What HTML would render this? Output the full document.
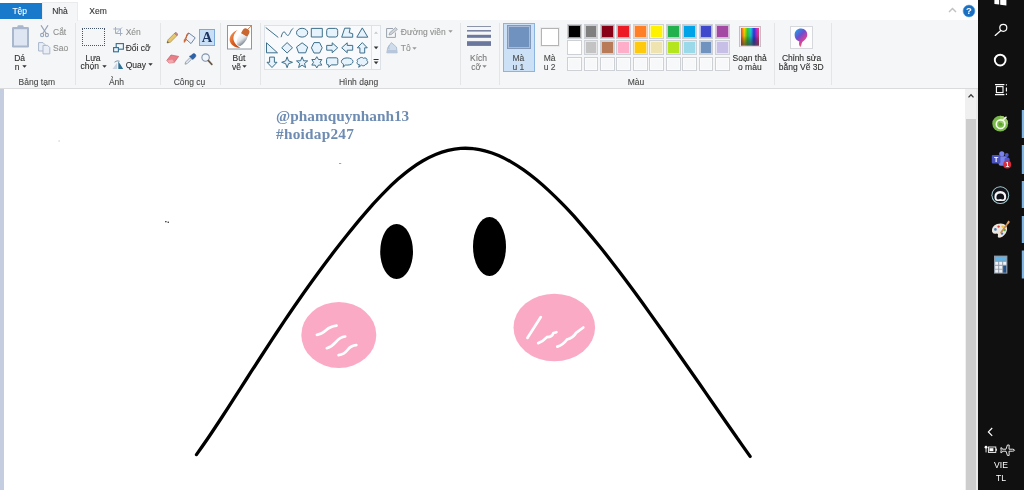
<!DOCTYPE html>
<html><head><meta charset="utf-8">
<style>
*{margin:0;padding:0;box-sizing:border-box}
html,body{width:1024px;height:490px;overflow:hidden;background:#fff;font-family:"Liberation Sans",sans-serif}
#root{position:absolute;left:0;top:0;width:1024px;height:490px;overflow:hidden;background:#fff;will-change:transform}
#soft{position:absolute;left:0;top:0;width:1024px;height:490px;filter:blur(0.35px)}
.abs{position:absolute}
/* tabs */
#tabbar{position:absolute;left:0;top:0;width:978px;height:19.5px;background:#fff}
#tep{position:absolute;left:0;top:2.5px;width:42px;height:16.7px;padding-right:2.5px;background:#1979ca;color:#fff;font-size:8.5px;line-height:17px;text-align:center}
#nha{position:absolute;left:42px;top:2px;width:36px;height:18.5px;background:#f5f6f7;border:1px solid #eaebed;border-bottom:none;color:#333;font-size:8.5px;line-height:17px;text-align:center}
#xem{position:absolute;left:88px;top:3px;width:20px;height:17px;color:#333;font-size:8.5px;line-height:17px;text-align:center}
#ribbon{position:absolute;left:0;top:19.5px;width:978px;height:69.3px;background:#f5f6f7;border-bottom:1px solid #dadbdc}
.t{position:absolute;font-size:8.5px;line-height:10px;color:#2e2e2e;white-space:nowrap;transform:translateX(-50%);text-align:center}
.tl{position:absolute;font-size:8.5px;line-height:10px;color:#2e2e2e;white-space:nowrap}
.t,.tl,#nha,#xem,#tep{-webkit-text-stroke:0.1px currentColor}
.dis{color:#8f8f8f}
.lab{color:#4a4a4a}
.lab2{color:#4a4a4a}
.dis2{color:#777}
.sw{position:absolute;width:14.7px;height:14.7px;border:1px solid #cdd1d6;box-shadow:inset 0 0 0 1px rgba(255,255,255,0.6)}
.sep{position:absolute;top:23px;width:1px;height:62px;background:#e4e5e7}
/* canvas */
#canvas{position:absolute;left:0;top:89px;width:965px;height:401px;background:#fff}
#lstrip{position:absolute;left:0;top:89px;width:3.5px;height:401px;background:#c5cee0}
#scroll{position:absolute;left:965.4px;top:89px;width:12.6px;height:401px;background:#f0f0f0}
#thumb{position:absolute;left:965.6px;top:118.5px;width:10.2px;height:372px;background:#cdcdcd}
#task{position:absolute;left:978px;top:0;width:46px;height:490px;background:#101010}
</style></head><body><div id="root"><div id="soft">
<div id="tabbar"></div>
<div id="ribbon"></div>
<div id="tep">Tệp</div><div id="nha">Nhà</div><div id="xem">Xem</div>
<svg class="abs" style="left:10.8px;top:24px" width="19" height="24" viewBox="0 0 19 24">
<rect x="1" y="3" width="17" height="20.5" rx="1.2" fill="#a9b7cc"/>
<rect x="3" y="5.2" width="13" height="16.3" fill="#dde6f2"/>
<rect x="6.5" y="1.2" width="6" height="3.6" rx="1" fill="#a9b7cc"/>
</svg>
<div class="t " style="left:19.6px;top:52.5px">Dá</div>
<div class="tl " style="left:14.7px;top:62.1px">n</div>
<svg class="abs" style="left:21.5px;top:65px" width="5" height="3" viewBox="0 0 5 3"><path d="M0.3 0.3 H4.7 L2.5 2.8 Z" fill="#333"/></svg>
<svg class="abs" style="left:39.5px;top:25px" width="9" height="12.5" viewBox="0 0 9 12.5">
<g fill="none" stroke="#93a2b9" stroke-width="1.1" stroke-linecap="round"><path d="M1.2 0.6 L6.2 8.5"/><path d="M7.8 0.6 L2.8 8.5"/>
<ellipse cx="2.1" cy="10" rx="1.5" ry="1.8"/><ellipse cx="6.9" cy="10" rx="1.5" ry="1.8"/></g></svg>
<div class="tl dis" style="left:53px;top:26.5px">Cắt</div>
<svg class="abs" style="left:38px;top:42px" width="12.5" height="12.5" viewBox="0 0 12.5 12.5">
<path d="M0.6 0.6 H5 L7 2.6 V9 H0.6 Z" fill="#e9eef6" stroke="#a9b7cc" stroke-width="1"/>
<path d="M5 3.4 H9.6 L11.8 5.6 V11.9 H5 Z" fill="#e9eef6" stroke="#a9b7cc" stroke-width="1"/>
</svg>
<div class="tl dis" style="left:53px;top:43.2px">Sao</div>
<div class="t lab" style="left:36.8px;top:76.8px">Bảng tạm</div>
<div class="sep" style="left:74.5px"></div>
<div class="abs" style="left:82.1px;top:28.2px;width:23px;height:18.3px;border:1px dotted #46566a"></div>
<div class="t " style="left:93px;top:52.5px">Lựa</div>
<div class="tl " style="left:80.6px;top:61.3px">chọn</div>
<svg class="abs" style="left:101.5px;top:64.5px" width="5" height="3" viewBox="0 0 5 3"><path d="M0.3 0.3 H4.7 L2.5 2.8 Z" fill="#333"/></svg>
<svg class="abs" style="left:113px;top:27px" width="10" height="9" viewBox="0 0 10 9">
<g fill="none" stroke="#a3afc2" stroke-width="1"><path d="M2.5 0 V6.5 H9.5"/><path d="M0.3 2 H7.5 V8.8"/><path d="M9 0.5 L3.5 6"/></g></svg>
<div class="tl dis" style="left:125.7px;top:26.5px">Xén</div>
<svg class="abs" style="left:112.8px;top:43px" width="11" height="10" viewBox="0 0 11 10">
<rect x="3.2" y="0.6" width="7.2" height="5.6" fill="#f5f6f7" stroke="#2e6f94" stroke-width="1.1"/>
<rect x="0.6" y="4.6" width="4.8" height="4.2" fill="#eef3f8" stroke="#2e6f94" stroke-width="1.1"/></svg>
<div class="tl " style="left:125.7px;top:43.2px">Đổi cỡ</div>
<svg class="abs" style="left:112.3px;top:59.5px" width="12" height="10" viewBox="0 0 12 10">
<path d="M0.5 9 L5.2 9 L5.2 2.5 Z" fill="#c9d3e0"/>
<path d="M6.3 9 L11.2 9 L6.3 1.2 Z" fill="#2e6f94"/>
<path d="M2.5 2.2 Q5 0 7.6 1.2" fill="none" stroke="#6f8aa5" stroke-width="0.9"/></svg>
<div class="tl " style="left:125.7px;top:59.9px">Quay</div>
<svg class="abs" style="left:148px;top:63.2px" width="5" height="3" viewBox="0 0 5 3"><path d="M0.3 0.3 H4.7 L2.5 2.8 Z" fill="#333"/></svg>
<div class="t lab" style="left:116.5px;top:76.8px">Ảnh</div>
<div class="sep" style="left:160px"></div>
<svg class="abs" style="left:165.5px;top:32px" width="12.5" height="12" viewBox="0 0 12.5 12">
<path d="M1 11 L2 7.8 L8.6 1.2 L11 3.6 L4.4 10.2 Z" fill="#e6c66e" stroke="#a68b45" stroke-width="0.7"/>
<path d="M8.6 1.2 L9.8 0.3 L12 2.4 L11 3.6 Z" fill="#d98a90" stroke="#8a5a5a" stroke-width="0.6"/>
<path d="M1 11 L1.6 9 L3 10.4 Z" fill="#555"/></svg>
<svg class="abs" style="left:183px;top:31.5px" width="13.5" height="12.5" viewBox="0 0 13.5 12.5">
<path d="M5.8 1 L12.2 5.8 L8 11.6 L2.4 6.6 Z" fill="#eef3f9" stroke="#6f86a8" stroke-width="1"/>
<path d="M3 5.6 Q0.6 7.2 1 10.5 Q2.2 9.4 3.4 8.2" fill="#e0703a" stroke="#c05a2a" stroke-width="0.5"/>
<path d="M5.8 1 Q3 2.5 3.2 6.5" fill="none" stroke="#d0602a" stroke-width="1.1"/></svg>
<div class="abs" style="left:198.5px;top:29px;width:16.8px;height:16.8px;background:#c9dff6;border:1px solid #7eaadb"></div>
<div class="abs" style="left:198.5px;top:29.4px;width:16.8px;height:16.8px;line-height:16.8px;text-align:center;font-family:'Liberation Serif',serif;font-weight:bold;font-size:14.5px;color:#1d3560">A</div>
<svg class="abs" style="left:166px;top:53.5px" width="13.5" height="10" viewBox="0 0 13.5 10">
<path d="M0.8 6.4 L5 1 L12.6 2.4 L8.2 8.6 L3 9 Z" fill="#e78088" stroke="#c45a64" stroke-width="0.7"/>
<path d="M0.8 6.4 L3 9 L8.2 8.6 L6.4 5.6 Z" fill="#f1a9ad"/></svg>
<svg class="abs" style="left:184px;top:52.5px" width="12.5" height="12" viewBox="0 0 12.5 12">
<path d="M1 11.2 L1.6 9 L6 4.6 L7.6 6.2 L3.2 10.6 Z" fill="#dfe6ee" stroke="#7a8aa0" stroke-width="0.7"/>
<path d="M5.4 3.2 L8.8 6.6 L10 5.4 L11.6 3.8 Q12.4 2 11 0.9 Q9.6 0.2 8.4 1.2 L6.8 2.8 Z" fill="#2d62a8" stroke="#1f4a88" stroke-width="0.5"/></svg>
<svg class="abs" style="left:201px;top:53px" width="12" height="12.5" viewBox="0 0 12 12.5">
<circle cx="4.6" cy="4.6" r="3.7" fill="#f2f6fb" stroke="#7f92ad" stroke-width="1.1"/>
<path d="M7.4 7.6 L10.8 11.4" stroke="#6a5a4a" stroke-width="1.7" stroke-linecap="round"/></svg>
<div class="t lab" style="left:189.5px;top:76.8px">Công cụ</div>
<div class="sep" style="left:220px"></div>
<svg class="abs" style="left:226.5px;top:25px" width="25" height="24.5" viewBox="0 0 25 24.5">
<defs><linearGradient id="bg1" x1="0" y1="0" x2="1" y2="1"><stop offset="0" stop-color="#f2a468"/><stop offset="0.5" stop-color="#dc5f22"/><stop offset="1" stop-color="#b8420f"/></linearGradient>
<linearGradient id="bg2" x1="0" y1="0" x2="1" y2="0.6"><stop offset="0" stop-color="#ffffff"/><stop offset="0.55" stop-color="#dfe3e8"/><stop offset="1" stop-color="#7d848c"/></linearGradient></defs>
<rect x="0.5" y="0.5" width="24" height="23.5" fill="#fff" stroke="#8f969e" stroke-width="1"/>
<path d="M10.6 5 C4.5 7.5 1.2 12.5 3.2 17.2 C5 21 9.5 23 13.4 22.8 C8.6 20.2 5.6 15.6 6.6 11.4 C7.2 9 8.6 6.6 10.6 5 Z" fill="url(#bg1)"/>
<path d="M24 1.2 L20.5 4.6" stroke="#c26a3a" stroke-width="0.9"/>
<g transform="translate(20.2 4.6) rotate(30)">
<path d="M-3.6 6.5 V2.6 Q-3.6 -0.6 0 -0.6 Q3.6 -0.6 3.6 2.6 V6.5 Z" fill="#c9652f"/>
<path d="M-4 6.2 H4 C4.8 10 4.2 14 2.2 17.6 Q0 19 -2.2 17.6 C-4.2 14 -4.8 10 -4 6.2 Z" fill="url(#bg2)"/>
</g>
</svg>
<div class="t " style="left:239px;top:52.5px">Bút</div>
<div class="tl " style="left:232px;top:62.1px">vẽ</div>
<svg class="abs" style="left:242.2px;top:65px" width="5" height="3" viewBox="0 0 5 3"><path d="M0.3 0.3 H4.7 L2.5 2.8 Z" fill="#333"/></svg>
<div class="sep" style="left:260px"></div>
<div class="abs" style="left:264.2px;top:25px;width:117px;height:45.2px;background:#f8fafc;border:1px solid #dde2e8"></div>
<div class="abs" style="left:371px;top:25px;width:1px;height:45.2px;background:#dde2e8"></div>
<svg class="abs" style="left:264px;top:25px" width="118" height="46" viewBox="0 0 118 46"><g transform="translate(8.0 7.7)"><path d="M-6 -5 L6 4.5" fill="none" stroke="#3f6f8a" stroke-width="1" stroke-linecap="round"/></g><g transform="translate(23.1 7.7)"><path d="M-5.9 4.1 C-4.6 -1 -3 -2.2 -1.5 0.6 C0 3.6 1.6 3.4 3 0 C4 -2.5 5 -3.8 5.9 -4.2" fill="none" stroke="#3f6f8a" stroke-width="1" stroke-linecap="round"/></g><g transform="translate(38.1 7.7)"><ellipse cx="0" cy="0" rx="5.6" ry="4.4" fill="#e6f2fc" stroke="#3f6f8a" stroke-width="1" stroke-linejoin="round"/></g><g transform="translate(52.8 7.7)"><rect x="-5.5" y="-4.3" width="11" height="8.6" fill="#e6f2fc" stroke="#3f6f8a" stroke-width="1" stroke-linejoin="round"/></g><g transform="translate(68.2 7.7)"><rect x="-5.5" y="-4.3" width="11" height="8.6" rx="2.2" fill="#e6f2fc" stroke="#3f6f8a" stroke-width="1" stroke-linejoin="round"/></g><g transform="translate(83.2 7.7)"><path d="M-2.5 -4.5 H3 L2 0 L5.5 1 L5.5 4.5 H-5.5 Z" fill="#e6f2fc" stroke="#3f6f8a" stroke-width="1" stroke-linejoin="round"/></g><g transform="translate(98.3 7.7)"><path d="M0 -4.8 L5.5 4.5 H-5.5 Z" fill="#e6f2fc" stroke="#3f6f8a" stroke-width="1" stroke-linejoin="round"/></g><g transform="translate(8.0 22.8)"><path d="M-5.5 -5 L5.5 5 H-5.5 Z" fill="#e6f2fc" stroke="#3f6f8a" stroke-width="1" stroke-linejoin="round"/></g><g transform="translate(23.1 22.8)"><path d="M0 -5.2 L5.4 0 L0 5.2 L-5.4 0 Z" fill="#e6f2fc" stroke="#3f6f8a" stroke-width="1" stroke-linejoin="round"/></g><g transform="translate(38.1 22.8)"><path d="M0 -5 L5.6 -0.8 L3.5 5 H-3.5 L-5.6 -0.8 Z" fill="#e6f2fc" stroke="#3f6f8a" stroke-width="1" stroke-linejoin="round"/></g><g transform="translate(52.8 22.8)"><path d="M-2.8 -5.2 H2.8 L5.4 0 L2.8 5.2 H-2.8 L-5.4 0 Z" fill="#e6f2fc" stroke="#3f6f8a" stroke-width="1" stroke-linejoin="round"/></g><g transform="translate(68.2 22.8)"><path d="M-5.5 -2.4 H0 V-5 L5.5 0 L0 5 V2.4 H-5.5 Z" fill="#e6f2fc" stroke="#3f6f8a" stroke-width="1" stroke-linejoin="round"/></g><g transform="translate(83.2 22.8)"><path d="M5.5 -2.4 H0 V-5 L-5.5 0 L0 5 V2.4 H5.5 Z" fill="#e6f2fc" stroke="#3f6f8a" stroke-width="1" stroke-linejoin="round"/></g><g transform="translate(98.3 22.8)"><path d="M-2.4 5.2 V0 H-5 L0 -5.2 L5 0 H2.4 V5.2 Z" fill="#e6f2fc" stroke="#3f6f8a" stroke-width="1" stroke-linejoin="round"/></g><g transform="translate(8.0 37.3)"><path d="M-2.4 -5.2 V0 H-5 L0 5.2 L5 0 H2.4 V-5.2 Z" fill="#e6f2fc" stroke="#3f6f8a" stroke-width="1" stroke-linejoin="round"/></g><g transform="translate(23.1 37.3)"><path d="M0 -5.4 L1.4 -1.4 L5.4 0 L1.4 1.4 L0 5.4 L-1.4 1.4 L-5.4 0 L-1.4 -1.4 Z" fill="#e6f2fc" stroke="#3f6f8a" stroke-width="1" stroke-linejoin="round"/></g><g transform="translate(38.1 37.3)"><path d="M0 -5.4 L1.5 -1.5 L5.6 -1.4 L2.4 1.2 L3.5 5.2 L0 2.9 L-3.5 5.2 L-2.4 1.2 L-5.6 -1.4 L-1.5 -1.5 Z" fill="#e6f2fc" stroke="#3f6f8a" stroke-width="1" stroke-linejoin="round"/></g><g transform="translate(52.8 37.3)"><path d="M0 -5.6 L1.7 -2.8 L5 -2.8 L3.3 0 L5 2.8 L1.7 2.8 L0 5.6 L-1.7 2.8 L-5 2.8 L-3.3 0 L-5 -2.8 L-1.7 -2.8 Z" fill="#e6f2fc" stroke="#3f6f8a" stroke-width="1" stroke-linejoin="round"/></g><g transform="translate(68.2 37.3)"><path d="M-4 -4.5 H4 Q5.6 -4.5 5.6 -3 V1.2 Q5.6 2.6 4 2.6 H-1 L-3.4 5 V2.6 H-4 Q-5.6 2.6 -5.6 1.2 V-3 Q-5.6 -4.5 -4 -4.5 Z" fill="#e6f2fc" stroke="#3f6f8a" stroke-width="1" stroke-linejoin="round"/></g><g transform="translate(83.2 37.3)"><path d="M0 -4.4 C3.4 -4.4 5.8 -2.8 5.8 -0.8 C5.8 1.4 3.2 2.8 0 2.8 C-0.6 2.8 -1.2 2.8 -1.8 2.6 L-4 5 L-3.6 2 C-5 1.4 -5.8 0.4 -5.8 -0.8 C-5.8 -2.8 -3.4 -4.4 0 -4.4 Z" fill="#e6f2fc" stroke="#3f6f8a" stroke-width="1" stroke-linejoin="round"/></g><g transform="translate(98.3 37.3)"><path d="M-3.2 -3.6 C-2 -5.4 0.6 -5 1.2 -4 C3 -5.2 5.4 -3.6 4.6 -1.8 C6.2 -0.6 5.4 2 3.4 2 C2.6 3.8 0 3.8 -0.8 2.8 L-3.6 5 L-2.8 2.4 C-5 2.6 -6 0.4 -4.8 -0.8 C-5.8 -2.2 -4.6 -3.8 -3.2 -3.6 Z" fill="#e6f2fc" stroke="#3f6f8a" stroke-width="1" stroke-linejoin="round"/></g><path d="M110 8.8 L112 6.6 L114 8.8 Z" fill="#c4c8cc"/><path d="M109.8 21.6 H114.4 L112.1 24.2 Z" fill="#333"/><path d="M109.6 34.5 H114.6" stroke="#333" stroke-width="1"/><path d="M109.8 36.6 H114.4 L112.1 39.2 Z" fill="#333"/></svg>
<svg class="abs" style="left:386px;top:26.5px" width="12" height="11" viewBox="0 0 12 11">
<path d="M7 1.5 H0.6 V10.4 H9.4 V5.5" fill="none" stroke="#9aa3ad" stroke-width="1"/>
<path d="M3 8 L3.8 5.6 L9.6 0.6 L11.4 2.4 L5.4 7.4 Z" fill="#cfd4da" stroke="#8a929c" stroke-width="0.6"/></svg>
<div class="tl dis" style="left:400.8px;top:26.8px">Đường viền</div>
<svg class="abs" style="left:448px;top:30.2px" width="5" height="3" viewBox="0 0 5 3"><path d="M0.3 0.3 H4.7 L2.5 2.8 Z" fill="#9a9a9a"/></svg>
<svg class="abs" style="left:386px;top:42px" width="12" height="11.5" viewBox="0 0 12 11.5">
<path d="M5.4 0.6 L10.4 5 L11.2 10.8 H0.8 L1.8 5.6 Z" fill="#cfdcec" stroke="#a5b6cc" stroke-width="0.8"/>
<path d="M1 8 H11 V10.8 H1 Z" fill="#b7c6da"/>
<path d="M3.4 3 Q2 5 3.2 7.4" fill="none" stroke="#a5b6cc" stroke-width="0.9"/></svg>
<div class="tl dis" style="left:400.8px;top:43.2px">Tô</div>
<svg class="abs" style="left:412px;top:46.6px" width="5" height="3" viewBox="0 0 5 3"><path d="M0.3 0.3 H4.7 L2.5 2.8 Z" fill="#9a9a9a"/></svg>
<div class="t lab" style="left:358.5px;top:76.8px">Hình dạng</div>
<div class="sep" style="left:460px"></div>
<svg class="abs" style="left:467px;top:25px" width="24.2" height="22" viewBox="0 0 24.2 22">
<rect x="0" y="1" width="24.2" height="1" fill="#8e94a8"/>
<rect x="0" y="5" width="24.2" height="1.6" fill="#7a83a0"/>
<rect x="0" y="9.8" width="24.2" height="3" fill="#6b779c"/>
<rect x="0" y="16.2" width="24.2" height="4.7" fill="#6b779c"/></svg>
<div class="t dis2" style="left:478.6px;top:52.5px">Kích</div>
<div class="tl dis2" style="left:471.3px;top:62.0px">cỡ</div>
<svg class="abs" style="left:481.6px;top:65px" width="5" height="3" viewBox="0 0 5 3"><path d="M0.3 0.3 H4.7 L2.5 2.8 Z" fill="#8a8a8a"/></svg>
<div class="sep" style="left:498.5px"></div>
<div class="abs" style="left:503px;top:23px;width:31.8px;height:49.4px;background:#cce1f6;border:1px solid #8bb4e0"></div>
<div class="abs" style="left:507px;top:25px;width:23.6px;height:24.2px;background:#7092be;border:1px solid #8499b8;box-shadow:inset 0 0 0 1px #a9bbd6"></div>
<div class="t lab2" style="left:518.3px;top:52.5px">Mà</div>
<div class="t lab2" style="left:518.3px;top:62.0px">u 1</div>
<div class="abs" style="left:541px;top:28px;width:18.4px;height:18.3px;background:#fff;border:1px solid #b4b4b4;box-shadow:0 0 0 1px #ececec"></div>
<div class="t lab2" style="left:549.7px;top:52.5px">Mà</div>
<div class="t lab2" style="left:549.7px;top:62.0px">u 2</div>
<div class="sw" style="left:567.0px;top:24.2px;background:#000000"></div>
<div class="sw" style="left:583.5px;top:24.2px;background:#7f7f7f"></div>
<div class="sw" style="left:600.0px;top:24.2px;background:#880015"></div>
<div class="sw" style="left:616.4px;top:24.2px;background:#ed1c24"></div>
<div class="sw" style="left:632.9px;top:24.2px;background:#ff7f27"></div>
<div class="sw" style="left:649.4px;top:24.2px;background:#fff200"></div>
<div class="sw" style="left:665.9px;top:24.2px;background:#22b14c"></div>
<div class="sw" style="left:682.4px;top:24.2px;background:#00a2e8"></div>
<div class="sw" style="left:698.8px;top:24.2px;background:#3f48cc"></div>
<div class="sw" style="left:715.3px;top:24.2px;background:#a349a4"></div>
<div class="sw" style="left:567.0px;top:40.2px;background:#ffffff"></div>
<div class="sw" style="left:583.5px;top:40.2px;background:#c3c3c3"></div>
<div class="sw" style="left:600.0px;top:40.2px;background:#b97a57"></div>
<div class="sw" style="left:616.4px;top:40.2px;background:#ffaec9"></div>
<div class="sw" style="left:632.9px;top:40.2px;background:#ffc90e"></div>
<div class="sw" style="left:649.4px;top:40.2px;background:#efe4b0"></div>
<div class="sw" style="left:665.9px;top:40.2px;background:#b5e61d"></div>
<div class="sw" style="left:682.4px;top:40.2px;background:#99d9ea"></div>
<div class="sw" style="left:698.8px;top:40.2px;background:#7092be"></div>
<div class="sw" style="left:715.3px;top:40.2px;background:#c8bfe7"></div>
<div class="sw" style="left:567.0px;top:56.8px;background:#f7f8f9"></div>
<div class="sw" style="left:583.5px;top:56.8px;background:#f7f8f9"></div>
<div class="sw" style="left:600.0px;top:56.8px;background:#f7f8f9"></div>
<div class="sw" style="left:616.4px;top:56.8px;background:#f7f8f9"></div>
<div class="sw" style="left:632.9px;top:56.8px;background:#f7f8f9"></div>
<div class="sw" style="left:649.4px;top:56.8px;background:#f7f8f9"></div>
<div class="sw" style="left:665.9px;top:56.8px;background:#f7f8f9"></div>
<div class="sw" style="left:682.4px;top:56.8px;background:#f7f8f9"></div>
<div class="sw" style="left:698.8px;top:56.8px;background:#f7f8f9"></div>
<div class="sw" style="left:715.3px;top:56.8px;background:#f7f8f9"></div>
<svg class="abs" style="left:738.6px;top:25.8px" width="22" height="21.6" viewBox="0 0 22 21.6">
<defs><linearGradient id="rb" x1="0" x2="1" y1="0" y2="0"><stop offset="0" stop-color="#ff3b30"/><stop offset="0.18" stop-color="#ffd400"/><stop offset="0.36" stop-color="#30d030"/><stop offset="0.55" stop-color="#20c8e0"/><stop offset="0.72" stop-color="#2838e0"/><stop offset="0.88" stop-color="#c030c8"/><stop offset="1" stop-color="#f04070"/></linearGradient>
<linearGradient id="dk" x1="0" x2="0" y1="0" y2="1"><stop offset="0" stop-color="#000" stop-opacity="0"/><stop offset="0.45" stop-color="#000" stop-opacity="0.1"/><stop offset="1" stop-color="#444" stop-opacity="0.75"/></linearGradient></defs>
<rect x="0.5" y="0.5" width="21" height="20.6" fill="#f4e9ee" stroke="#c9bcc4" stroke-width="1"/>
<rect x="2" y="2" width="18" height="17.6" fill="url(#rb)"/><rect x="2" y="2" width="18" height="17.6" fill="url(#dk)"/></svg>
<div class="t " style="left:749.6px;top:52.5px">Soạn thả</div>
<div class="t " style="left:749.8px;top:62.0px">o màu</div>
<div class="t lab" style="left:636px;top:76.8px">Màu</div>
<div class="sep" style="left:773.7px"></div>
<svg class="abs" style="left:790.3px;top:25.8px" width="23" height="23" viewBox="0 0 23 23">
<defs><linearGradient id="p3" x1="0.1" y1="0" x2="0.8" y2="1"><stop offset="0" stop-color="#1fa4e8"/><stop offset="0.4" stop-color="#6a4fd0"/><stop offset="0.7" stop-color="#d8409a"/><stop offset="1" stop-color="#f7903a"/></linearGradient></defs>
<rect x="0.5" y="0.5" width="22" height="22" fill="#fdfdfd" stroke="#d6d8db" stroke-width="1"/>
<path d="M11 2.6 C15 2.6 17.5 5.6 17.3 9 C17.1 12.6 14.2 14.2 12.4 16 C11.4 17.2 11.8 19.2 10.4 21 C9.2 19.6 8.6 17.6 9.4 15.4 C6.6 14.6 4.6 12.2 4.6 8.9 C4.6 5.3 7.4 2.6 11 2.6 Z" fill="url(#p3)"/></svg>
<div class="t " style="left:801.5px;top:52.5px">Chỉnh sửa</div>
<div class="t " style="left:801.2px;top:62.0px">bằng Vẽ 3D</div>
<div class="sep" style="left:830.5px"></div>
<svg class="abs" style="left:962px;top:3.7px" width="14" height="14" viewBox="0 0 14 14"><circle cx="7" cy="7" r="5.9" fill="#1a6fc0"/><circle cx="7" cy="7" r="5.9" fill="none" stroke="#4d97dd" stroke-width="0.6"/>
<text x="7" y="10.4" text-anchor="middle" font-family="Liberation Sans, sans-serif" font-weight="bold" font-size="9.5" fill="#fff">?</text></svg>
<svg class="abs" style="left:947.8px;top:6.6px" width="9" height="6" viewBox="0 0 9 6"><path d="M1 5 L4.5 1.4 L8 5" fill="none" stroke="#c2c2c2" stroke-width="1.4"/></svg>
<svg class="abs" style="left:967.5px;top:93px" width="8" height="6" viewBox="0 0 8 6"><path d="M1 4.8 L4 1.6 L7 4.8" fill="none" stroke="#404040" stroke-width="1.5"/></svg>

<div id="canvas"></div><div id="lstrip"></div>
<svg class="abs" style="left:0;top:89px" width="965" height="401" viewBox="0 89 965 401">
<path d="M196.5 454.6C198.6 451.6 204.9 442.7 209.1 436.5C213.3 430.3 217.5 423.9 221.7 417.5C225.9 411.1 230.1 404.6 234.2 398.1C238.4 391.6 242.6 385.0 246.8 378.5C251.0 372.0 255.2 365.4 259.4 359.0C263.6 352.5 267.8 346.0 272.0 339.6C276.2 333.3 280.4 326.9 284.6 320.7C288.8 314.5 293.0 308.3 297.2 302.3C301.3 296.3 305.5 290.3 309.7 284.5C313.9 278.6 318.1 272.9 322.3 267.2C326.5 261.6 330.7 256.0 334.9 250.6C339.1 245.1 343.3 239.7 347.5 234.5C351.7 229.3 355.9 224.1 360.1 219.1C364.3 214.1 368.5 209.3 372.6 204.6C376.8 200.0 381.0 195.5 385.2 191.3C389.4 187.0 393.6 183.0 397.8 179.3C402.0 175.7 406.2 172.2 410.4 169.1C414.6 166.0 418.8 163.2 423.0 160.8C427.2 158.4 431.4 156.2 435.6 154.5C439.7 152.8 443.9 151.4 448.1 150.4C452.3 149.4 456.5 148.7 460.7 148.4C464.9 148.1 469.1 148.2 473.3 148.7C477.5 149.1 481.7 149.9 485.9 151.1C490.1 152.2 494.3 153.7 498.5 155.5C502.7 157.3 506.9 159.5 511.0 161.9C515.2 164.3 519.4 167.0 523.6 169.9C527.8 172.9 532.0 176.1 536.2 179.5C540.4 183.0 544.6 186.7 548.8 190.6C553.0 194.5 557.2 198.6 561.4 202.9C565.6 207.1 569.8 211.6 574.0 216.2C578.1 220.9 582.3 225.7 586.5 230.6C590.7 235.5 594.9 240.6 599.1 245.8C603.3 250.9 607.5 256.3 611.7 261.7C615.9 267.1 620.1 272.6 624.3 278.2C628.5 283.8 632.7 289.4 636.9 295.2C641.1 300.9 645.3 306.7 649.4 312.6C653.6 318.4 657.8 324.3 662.0 330.2C666.2 336.2 670.4 342.2 674.6 348.2C678.8 354.2 683.0 360.2 687.2 366.2C691.4 372.2 695.6 378.3 699.8 384.3C704.0 390.4 708.2 396.4 712.4 402.5C716.5 408.5 720.7 414.5 724.9 420.5C729.1 426.5 733.3 432.5 737.5 438.5C741.7 444.5 748.0 453.4 750.1 456.4" fill="none" stroke="#000" stroke-width="3.3" stroke-linecap="round" stroke-linejoin="round"/>
<ellipse cx="396.6" cy="251.5" rx="16.4" ry="27.6" fill="#000"/>
<ellipse cx="489.5" cy="246.5" rx="16.5" ry="29.5" fill="#000"/>
<ellipse cx="338.8" cy="335" rx="37.5" ry="33" fill="#fbaac6"/>
<ellipse cx="554.3" cy="327.5" rx="40.8" ry="33.8" fill="#fbaac6"/>
<g stroke="#fff" stroke-width="2.7" stroke-linecap="round" fill="none">
<path d="M316.9 334.8 Q322 334 326 330.2 T336.5 325.6"/><path d="M326.8 348.2 Q332 346.5 336 341.8 T345.2 336.5"/><path d="M338.6 355.1 Q344 354.5 347.5 350 T356.3 345.2"/>
<path d="M527.4 337.9 L540.8 317.1"/><path d="M538.2 343.1 Q543 341.5 547 337.2 Q552 337 553.5 333 L556.4 332.2"/><path d="M557.3 346.6 Q563 345 567 339.5 Q573 338 576 333 L583.3 327.5"/>
</g>
<text x="276" y="120.6" font-family="Liberation Serif, serif" font-weight="bold" font-size="15.3" fill="#6e8cb2">@phamquynhanh13</text>
<text x="276" y="139.2" font-family="Liberation Serif, serif" font-weight="bold" font-size="15.3" fill="#6e8cb2" letter-spacing="0.25">#hoidap247</text>
<rect x="165.2" y="221" width="1.3" height="1.3" fill="#222"/><rect x="167.6" y="221.6" width="1.3" height="1.3" fill="#222"/>
<rect x="339" y="163" width="2.2" height="0.9" fill="#999"/><rect x="58.5" y="140.5" width="1.2" height="1" fill="#bbb"/>
</svg>
<div id="scroll"></div><div id="thumb"></div>
<div id="task"></div>
<div class="abs" style="left:975.8px;top:89px;width:2.4px;height:401px;background:#e9e9e9"></div>
<svg class="abs" style="left:978px;top:0" width="46" height="490" viewBox="978 0 46 490">
<!-- windows logo (cropped) -->
<path d="M994.4 0 L999.2 0 L999.2 4.6 L994.4 4 Z M1000.2 0 L1006.4 0 L1006.4 5.4 L1000.2 4.7 Z" fill="#fff"/>
<!-- search -->
<circle cx="1003.3" cy="27.8" r="3.5" fill="none" stroke="#fff" stroke-width="1.2"/>
<path d="M1000.8 30.5 L995.2 35.4" stroke="#fff" stroke-width="1.3" stroke-linecap="round"/>
<!-- cortana -->
<circle cx="1000.2" cy="60.1" r="5.4" fill="none" stroke="#fff" stroke-width="1.9"/>
<!-- task view -->
<g fill="none" stroke="#fff" stroke-width="1.1">
<rect x="996.4" y="86.6" width="6.6" height="6" />
<path d="M995 84.6 H1004.4 M995 94.6 H1004.4"/>
<path d="M1006.4 84.2 V85.6 M1006.4 87.6 V91.6 M1006.4 93.6 V95"/>
</g>
<!-- active strips -->
<g fill="#7fb6e8">
<rect x="1021.8" y="110" width="2.2" height="28"/>
<rect x="1021.8" y="145" width="2.2" height="29"/>
<rect x="1021.8" y="181" width="2.2" height="27"/>
<rect x="1021.8" y="216" width="2.2" height="27"/>
<rect x="1021.8" y="250.5" width="2.2" height="28"/>
</g>
<!-- coc coc -->
<circle cx="1000.2" cy="123.7" r="7.9" fill="#79b94a"/>
<path d="M1000.2 115.8 A8 8 0 0 1 1008.2 123.8 L1000.2 123.8 Z" fill="#9ccb6c"/>
<circle cx="1000.6" cy="124.2" r="4.3" fill="none" stroke="#f4fbe9" stroke-width="1.7"/>
<path d="M1002.5 120.5 L1006.5 116.8" stroke="#f4fbe9" stroke-width="1.4"/>
<circle cx="1000.6" cy="124.2" r="1.6" fill="#5aa52e"/>
<!-- teams -->
<circle cx="1001.8" cy="153.8" r="2.6" fill="#7b83eb"/>
<circle cx="1006.8" cy="155" r="1.9" fill="#5059c9"/>
<rect x="998.6" y="156.2" width="8.4" height="9.6" rx="2" fill="#7b83eb"/>
<rect x="1004.6" y="157.6" width="5" height="7" rx="1.6" fill="#5059c9"/>
<rect x="991.8" y="155" width="8.6" height="8.6" rx="1" fill="#4b53bc"/>
<text x="996.1" y="162" text-anchor="middle" font-family="Liberation Sans, sans-serif" font-weight="bold" font-size="7" fill="#fff">T</text>
<circle cx="1007.2" cy="164.6" r="4" fill="#d92b3a"/>
<text x="1007.2" y="167.1" text-anchor="middle" font-family="Liberation Sans, sans-serif" font-weight="bold" font-size="6.5" fill="#fff">1</text>
<!-- penguin-like -->
<circle cx="1000.3" cy="195.2" r="8.9" fill="#a9d0d6"/>
<circle cx="1000.3" cy="195.2" r="7.9" fill="#10131a"/>
<path d="M994.4 197 Q994.2 191.2 1000.3 190.9 Q1006.4 191.2 1006.2 197 Q1006 201 1003.2 200.9 L997.4 200.9 Q994.6 201 994.4 197 Z" fill="#f6f6f6"/>
<path d="M996.4 197.6 Q996.4 193.6 1000.3 193.5 Q1004.2 193.6 1004.2 197.6 Q1004.2 199.6 1002.6 199.5 Q1000.3 198.4 998 199.5 Q996.4 199.6 996.4 197.6 Z" fill="#10131a"/>
<!-- paint -->
<path d="M992 231.5 Q991.4 226 997 224 Q1003 222.4 1006 225.6 Q1008.4 229 1005.6 233.4 Q1002.6 237.6 998.6 237.8 Q997.2 236.6 998 235 Q998.4 233.4 996.8 233.4 Q993 234.6 992 231.5 Z" fill="#ece6da"/>
<circle cx="995.4" cy="229.4" r="1.3" fill="#3a78c8"/><circle cx="998.6" cy="226.6" r="1.2" fill="#e04040"/><circle cx="1002.6" cy="226.6" r="1.2" fill="#f0c030"/><circle cx="1004.6" cy="230" r="1.2" fill="#50a848"/><circle cx="1002" cy="233.6" r="1.2" fill="#3a78c8"/>
<path d="M1000 232.4 L1006.4 223.4 L1008 224.6 L1001.4 233.4 Z" fill="#c98a4a"/>
<path d="M1006.4 223.4 L1008.4 220.4 Q1010 221 1009.6 222.6 L1008 224.6 Z" fill="#f0a060"/>
<!-- calculator -->
<rect x="994" y="255.6" width="13.4" height="18" fill="#8f9aa6"/>
<rect x="995.2" y="256.8" width="11" height="3.8" fill="#5fb4ea"/>
<g fill="#eef1f4">
<rect x="995.2" y="261.8" width="3" height="3"/><rect x="999.2" y="261.8" width="3" height="3"/><rect x="1003.2" y="261.8" width="3" height="3"/>
<rect x="995.2" y="265.8" width="3" height="3"/><rect x="999.2" y="265.8" width="3" height="3"/>
<rect x="995.2" y="269.6" width="3" height="3"/><rect x="999.2" y="269.6" width="3" height="3"/>
</g>
<rect x="1003.2" y="265.8" width="3" height="6.8" fill="#24508a"/>
<!-- tray -->
<path d="M992.2 428 L988.4 431.9 L992.2 435.8" fill="none" stroke="#fff" stroke-width="1.2"/>
<!-- battery w/ plug -->
<g fill="#fff"><rect x="988.4" y="447" width="7.4" height="5.4" fill="none" stroke="#fff" stroke-width="0.9"/><rect x="989.4" y="448.2" width="4" height="3"/><rect x="995.9" y="448.6" width="0.9" height="2.2"/>
<circle cx="986" cy="447.2" r="1.4"/><rect x="985.6" y="448" width="0.9" height="4.4"/></g>
<!-- airplane outline -->
<path d="M1002.4 449.2 H1006 L1007.4 445 H1009.2 L1009 449.2 H1012.6 Q1014.6 449.4 1014.6 450.2 Q1014.6 451 1012.6 451.2 H1009 L1009.2 455.4 H1007.4 L1006 451.2 H1002.4 L1001.8 452.6 H1000.8 L1001.2 450.2 L1000.8 447.8 H1001.8 Z" fill="none" stroke="#fff" stroke-width="0.9" stroke-linejoin="round"/>
<text x="1001" y="468.4" text-anchor="middle" font-family="Liberation Sans, sans-serif" font-size="8.6" fill="#fff">VIE</text>
<text x="1001" y="481" text-anchor="middle" font-family="Liberation Sans, sans-serif" font-size="8.6" fill="#fff">TL</text>
</svg>
<svg class="abs" style="left:967.2px;top:93.3px" width="8" height="6" viewBox="0 0 8 6"><path d="M1.5 4.4 L4 1.8 L6.5 4.4" fill="none" stroke="#3a3a3a" stroke-width="1.35"/></svg>

</div></div></body></html>
